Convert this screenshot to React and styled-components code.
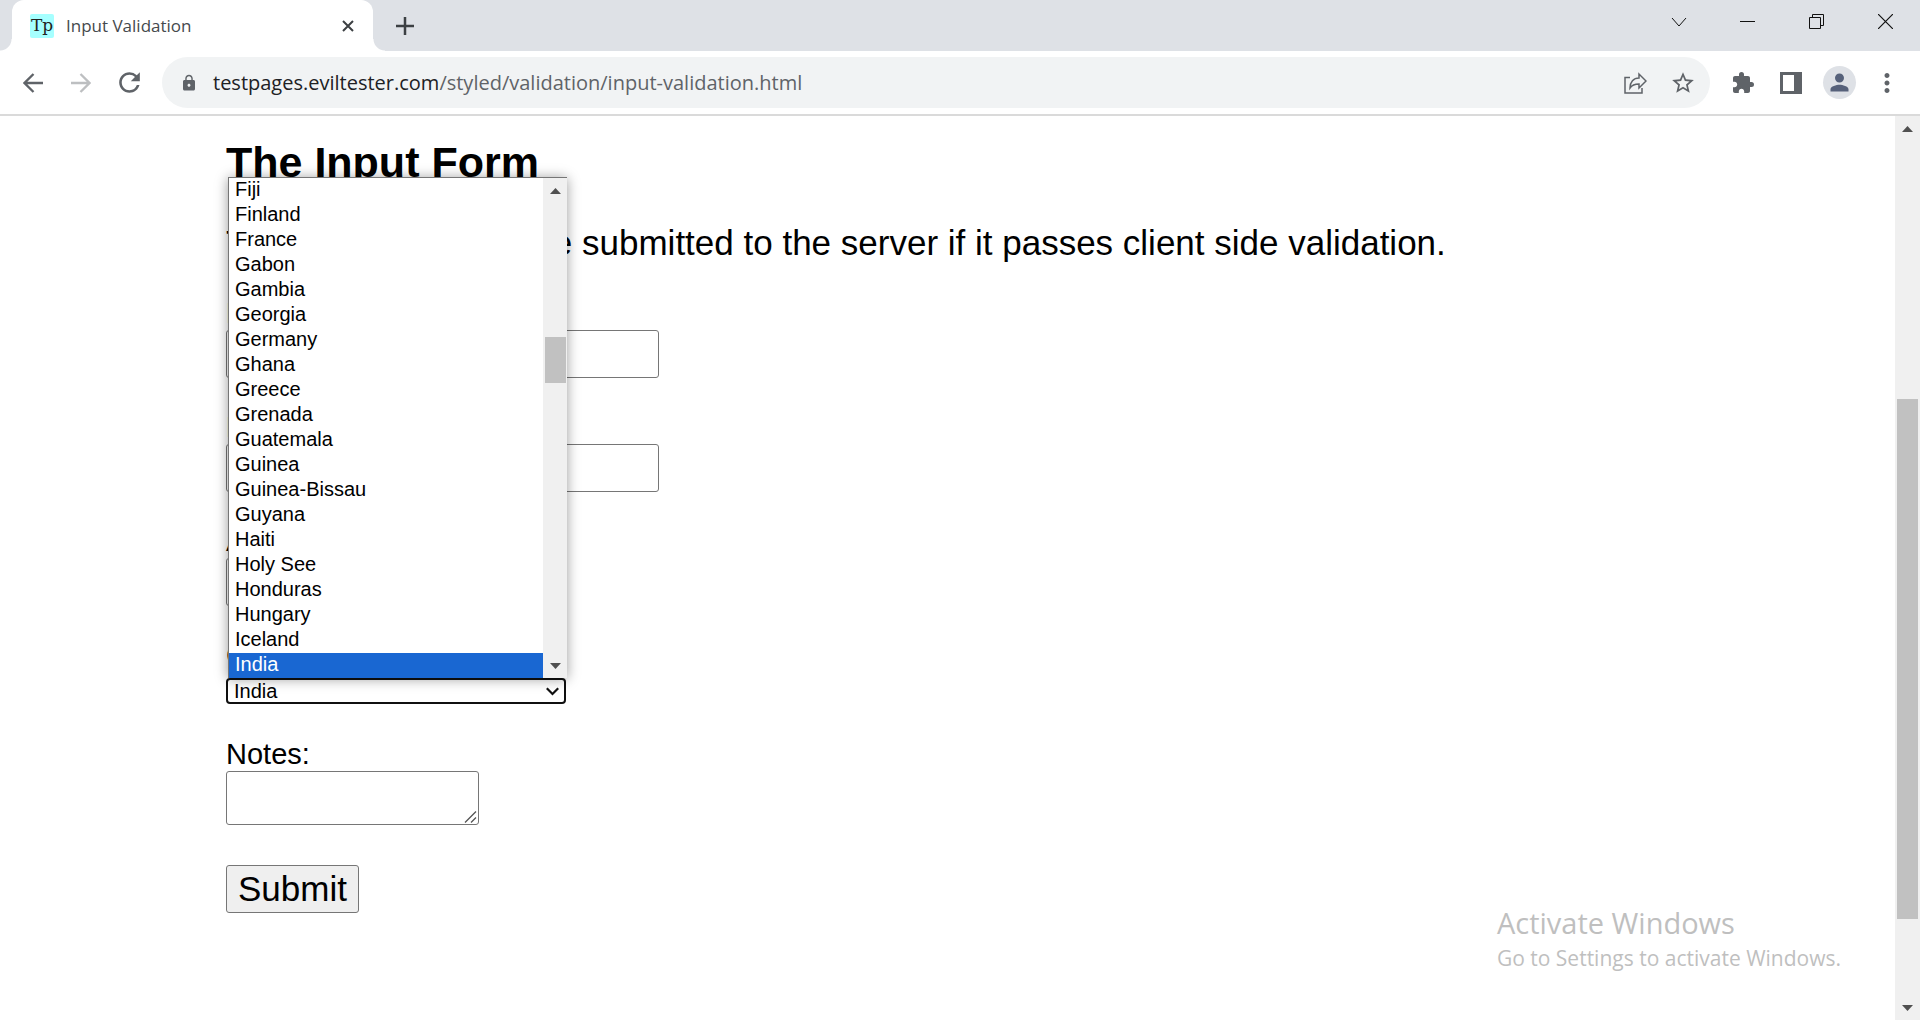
import React from "react";
import styled, { createGlobalStyle, css } from "styled-components";
import {
  MdExtension,
  MdLock,
  MdMoreVert,
  MdPerson,
  MdRefresh,
  MdStarBorder,
} from "react-icons/md";

const uiFont = '"Segoe UI", "Open Sans", "Noto Sans", sans-serif';
const pageFont = 'Arial, "Liberation Sans", sans-serif';

const GlobalStyle = createGlobalStyle`
  *, *::before, *::after { box-sizing: border-box; }
  body { margin: 0; background: #fff; }
`;

const Browser = styled.div`
  display: flex;
  flex-direction: column;
  height: 100vh;
  overflow: hidden;
  position: relative;
`;

const plainButton = css`
  display: flex;
  align-items: center;
  justify-content: center;
  flex: none;
  padding: 0;
  border: 0;
  background: none;
  color: #5f6368;
`;

/* ---------- tab strip ---------- */

const TabStrip = styled.header`
  display: flex;
  flex: none;
  height: 51px;
  padding-left: 12px;
  background: #dee1e6;
`;

const Tab = styled.div`
  position: relative;
  display: flex;
  align-items: center;
  width: 361px;
  padding: 0 12px 0 18px;
  border-radius: 12px 12px 0 0;
  background: #fff;

  &::before,
  &::after {
    content: "";
    position: absolute;
    bottom: 0;
    width: 12px;
    height: 12px;
  }
  &::before {
    right: 100%;
    background: radial-gradient(circle at 0 0, #dee1e6 11px, #fff 12px);
  }
  &::after {
    left: 100%;
    background: radial-gradient(circle at 100% 0, #dee1e6 11px, #fff 12px);
  }
`;

const Favicon = styled.span`
  width: 24px;
  height: 24px;
  border-radius: 2px;
  background: #a6ffff;
  color: #222;
  font: 17px/22px "DejaVu Serif", serif;
  text-align: center;
`;

const TabTitle = styled.span`
  flex: 1;
  margin-left: 12px;
  color: #45494d;
  font: 17px/24px ${uiFont};
`;

const TabButton = styled.button`
  ${plainButton}
  width: 26px;
  height: 26px;
  color: #3c4043;
`;

const NewTabButton = styled(TabButton)`
  width: 40px;
  height: 51px;
  margin-left: 12px;
`;

const WindowControls = styled.div`
  display: flex;
  margin-left: auto;
`;

const WindowButton = styled.button`
  ${plainButton}
  width: 69px;
  height: 43px;
  color: #111;
`;

/* ---------- toolbar ---------- */

const Toolbar = styled.nav`
  display: flex;
  align-items: center;
  flex: none;
  gap: 9px;
  height: 65px;
  padding: 0 9px;
  border-bottom: 2px solid #dadada;
  background: #fff;
`;

const ButtonGroup = styled.div`
  display: flex;
  flex: none;
`;

const IconButton = styled.button`
  ${plainButton}
  width: 48px;
  height: 48px;
  color: ${(p) => (p.$faded ? "#bdbfc1" : "#5f6368")};
`;

const AddressBar = styled.div`
  display: flex;
  align-items: center;
  flex: 1;
  height: 51px;
  padding: 0 3px;
  border-radius: 26px;
  background: #f1f3f4;
`;

const Url = styled.div`
  flex: 1;
  color: #5f6368;
  font: 20px/28px ${uiFont};
  white-space: nowrap;
`;

const Host = styled.span`
  color: #202124;
`;

const Avatar = styled.span`
  display: flex;
  align-items: center;
  justify-content: center;
  width: 33px;
  height: 33px;
  border-radius: 50%;
  background: #dee1e6;
  color: #56617a;
`;

/* ---------- viewport and scroll bars ---------- */

const Viewport = styled.div`
  display: flex;
  flex: 1;
  min-height: 0;
`;

const ScrollTrack = styled.div`
  display: flex;
  flex-direction: column;
  flex: none;
  align-items: center;
  width: ${(p) => p.$width}px;
  background: #f0f0f0;
`;

const ScrollArrow = styled.button`
  ${plainButton}
  width: 100%;
  height: 25px;
  color: #505050;
`;

const ScrollLane = styled.div`
  display: flex;
  flex-direction: column;
  flex: 1;
  width: 21px;
`;

const ScrollSpace = styled.div`
  flex: ${(p) => p.$grow} 0 0;
`;

const ScrollThumb = styled(ScrollSpace)`
  background: #c1c1c1;
`;

/* ---------- page ---------- */

const Page = styled.main`
  flex: 1;
  min-width: 0;
  overflow: hidden;
  padding-top: 21px;
  color: #000;
  font: 29px/33px ${pageFont};
`;

const Content = styled.div`
  max-width: 1443px;
  margin: 0 auto;
`;

const Heading = styled.h2`
  margin: 0 0 36px;
  font-size: 43px;
  line-height: 50px;
`;

const Intro = styled.p`
  margin: 0 0 34px;
  font-size: 35px;
  line-height: 40px;
`;

const Form = styled.form`
  display: flex;
  flex-direction: column;
  gap: 33px;
`;

const FieldLabel = styled.label`
  display: block;
`;

const control = css`
  margin: 0;
  border: 1px solid #767676;
  border-radius: 3px;
  background: #fff;
  color: #000;
  font-family: ${pageFont};
`;

const TextInput = styled.input`
  ${control}
  width: ${(p) => p.$width}px;
  height: 48px;
  font-size: 35px;
`;

const SelectBox = styled.div`
  position: relative;
  display: inline-flex;
`;

const NotesBox = styled.div`
  position: relative;
  display: flex;
  width: fit-content;
  margin-bottom: 7px;
`;

const Notes = styled.textarea`
  ${control}
  width: 253px;
  height: 54px;
  font-size: 20px;
  resize: none;
`;

const ResizeGrip = styled.svg`
  position: absolute;
  right: 2px;
  bottom: 2px;
  pointer-events: none;
`;

const Select = styled.select`
  ${control}
  appearance: none;
  width: 340px;
  height: 26px;
  padding: 0 32px 0 6px;
  border: 2px solid #101010;
  border-radius: 4px;
  outline: none;
  font-size: 20px;
  line-height: 22px;
`;

const SelectChevron = styled.svg`
  position: absolute;
  right: 7px;
  top: 9px;
  pointer-events: none;
`;

const Popup = styled.div`
  position: absolute;
  z-index: 1;
  left: 2px;
  right: -1px;
  bottom: 100%;
  display: flex;
  border: solid #767676;
  border-width: 1px 0 0 1px;
  background: #fff;
  box-shadow: 0 1px 12px rgba(0, 0, 0, 0.4);
`;

const OptionList = styled.ul`
  flex: 1;
  margin: 0;
  padding: 0;
  list-style: none;
  font-size: 20px;
  line-height: 23px;
`;

const Option = styled.li`
  padding: 0 6px 2px;
  background: ${(p) => (p.$selected ? "#1967d2" : "#fff")};
  color: ${(p) => (p.$selected ? "#fff" : "#000")};
`;

const Submit = styled.button`
  ${control}
  padding: 3px 11px;
  background: #efefef;
  font-size: 35px;
  line-height: 40px;
`;

const Watermark = styled.aside`
  position: absolute;
  right: 79px;
  bottom: 47px;
  color: #bfbfbf;
  font: 21px/30px ${uiFont};
  pointer-events: none;
`;

const WatermarkTitle = styled.div`
  font-size: 29px;
  line-height: 40px;
`;

const countries = [
  "Fiji", "Finland", "France", "Gabon", "Gambia", "Georgia", "Germany",
  "Ghana", "Greece", "Grenada", "Guatemala", "Guinea", "Guinea-Bissau",
  "Guyana", "Haiti", "Holy See", "Honduras", "Hungary", "Iceland", "India",
];

const Line = ({ size, d, width = 2 }) => (
  <svg
    width={size}
    height={size}
    viewBox={`0 0 ${size} ${size}`}
    fill="none"
    stroke="currentColor"
    strokeWidth={width}
    aria-hidden="true"
  >
    <path d={d} />
  </svg>
);

const Triangle = ({ down }) => (
  <svg width="11" height="6" viewBox="0 0 11 6" fill="currentColor" aria-hidden="true">
    <path d={down ? "M0 0h11L5.5 6z" : "M0 6h11L5.5 0z"} />
  </svg>
);

const ScrollBar = ({ width, before, thumb, after }) => (
  <ScrollTrack $width={width} aria-hidden="true">
    <ScrollArrow type="button" tabIndex={-1}><Triangle /></ScrollArrow>
    <ScrollLane>
      <ScrollSpace $grow={before} />
      <ScrollThumb $grow={thumb} />
      <ScrollSpace $grow={after} />
    </ScrollLane>
    <ScrollArrow type="button" tabIndex={-1}><Triangle down /></ScrollArrow>
  </ScrollTrack>
);

export default function App() {
  return (
    <Browser>
      <GlobalStyle />
      <TabStrip>
        <Tab>
          <Favicon>Tp</Favicon>
          <TabTitle>Input Validation</TabTitle>
          <TabButton type="button" aria-label="Close tab">
            <Line size={12} d="M1 1l10 10M11 1L1 11" />
          </TabButton>
        </Tab>
        <NewTabButton type="button" aria-label="New tab">
          <Line size={18} d="M9 0v18M0 9h18" width={2.5} />
        </NewTabButton>
        <WindowControls>
          <WindowButton type="button" aria-label="Search tabs">
            <Line size={16} d="M1 4l7 8 7-8" width={1} />
          </WindowButton>
          <WindowButton type="button" aria-label="Minimize">
            <Line size={15} d="M0 7.5h15" width={1} />
          </WindowButton>
          <WindowButton type="button" aria-label="Restore">
            <Line size={15} d="M.5 3.5h11v11H.5zM3.5 3.5v-3h11v11h-3" width={1} />
          </WindowButton>
          <WindowButton type="button" aria-label="Close">
            <Line size={15} d="M0 0l15 15M15 0L0 15" width={1.2} />
          </WindowButton>
        </WindowControls>
      </TabStrip>

      <Toolbar>
        <ButtonGroup>
          <IconButton type="button" aria-label="Back">
            <Line size={20} d="M20 10H1.5M10.5 1l-9 9 9 9" width={2.3} />
          </IconButton>
          <IconButton type="button" aria-label="Forward" $faded>
            <Line size={20} d="M0 10h18.5M9.5 1l9 9-9 9" width={2.3} />
          </IconButton>
          <IconButton type="button" aria-label="Reload"><MdRefresh size={31} /></IconButton>
        </ButtonGroup>
        <AddressBar>
          <IconButton type="button" aria-label="Site information"><MdLock size={18} /></IconButton>
          <Url role="textbox" aria-label="Address">
            <Host>testpages.eviltester.com</Host>/styled/validation/input-validation.html
          </Url>
          <IconButton type="button" aria-label="Share">
            <Line
              size={24}
              d="M7 6.5H2v15.5h17v-5M7 17c0-6 3.5-10 9-10V3l7 7-7 7v-4c-4 0-7 1-9 4z"
              width={1.5}
            />
          </IconButton>
          <IconButton type="button" aria-label="Bookmark"><MdStarBorder size={26} /></IconButton>
        </AddressBar>
        <ButtonGroup>
          <IconButton type="button" aria-label="Extensions"><MdExtension size={24} /></IconButton>
          <IconButton type="button" aria-label="Side panel">
            <svg width="22" height="22" viewBox="0 0 22 22" fill="currentColor" aria-hidden="true">
              <path fillRule="evenodd" d="M0 0h22v22H0zM3 3v16h11V3z" />
            </svg>
          </IconButton>
          <IconButton type="button" aria-label="Profile">
            <Avatar><MdPerson size={27} /></Avatar>
          </IconButton>
          <IconButton type="button" aria-label="Menu"><MdMoreVert size={30} /></IconButton>
        </ButtonGroup>
      </Toolbar>

      <Viewport>
        <Page>
          <Content>
            <Heading>The Input Form</Heading>
            <Intro>
              The input value will be submitted to the server if it passes client side validation.
            </Intro>
            <Form onSubmit={(e) => e.preventDefault()}>
              <div>
                <FieldLabel htmlFor="firstname">First name:</FieldLabel>
                <TextInput id="firstname" type="text" $width={433} />
              </div>
              <div>
                <FieldLabel htmlFor="surname">Last name:</FieldLabel>
                <TextInput id="surname" type="text" $width={433} />
              </div>
              <div>
                <FieldLabel htmlFor="age">Age:</FieldLabel>
                <TextInput id="age" type="text" $width={253} />
              </div>
              <div>
                <FieldLabel htmlFor="country">Country:</FieldLabel>
                <SelectBox>
                  <Select id="country" defaultValue="India">
                    {countries.map((name) => <option key={name}>{name}</option>)}
                  </Select>
                  <SelectChevron width="13" height="9" viewBox="0 0 13 9" fill="none" stroke="#101010" strokeWidth="2.2">
                    <path d="M.8 1.2l5.7 5.8 5.7-5.8" />
                  </SelectChevron>
                  <Popup>
                    <OptionList role="listbox" aria-label="Country">
                      {countries.map((name) => (
                        <Option
                          key={name}
                          role="option"
                          aria-selected={name === "India"}
                          $selected={name === "India"}
                        >
                          {name}
                        </Option>
                      ))}
                    </OptionList>
                    <ScrollBar width={24} before={134} thumb={46} after={270} />
                  </Popup>
                </SelectBox>
              </div>
              <div>
                <FieldLabel htmlFor="notes">Notes:</FieldLabel>
                <NotesBox>
                  <Notes id="notes" />
                  <ResizeGrip width="13" height="12" viewBox="0 0 13 12" fill="none" stroke="#555" strokeWidth="1.3">
                    <path d="M1 11.5L12 .5M7 11.5l5-5" />
                  </ResizeGrip>
                </NotesBox>
              </div>
              <div>
                <Submit type="submit">Submit</Submit>
              </div>
            </Form>
          </Content>
        </Page>
        <ScrollBar width={25} before={258} thumb={520} after={76} />
      </Viewport>

      <Watermark>
        <WatermarkTitle>Activate Windows</WatermarkTitle>
        Go to Settings to activate Windows.
      </Watermark>
    </Browser>
  );
}
